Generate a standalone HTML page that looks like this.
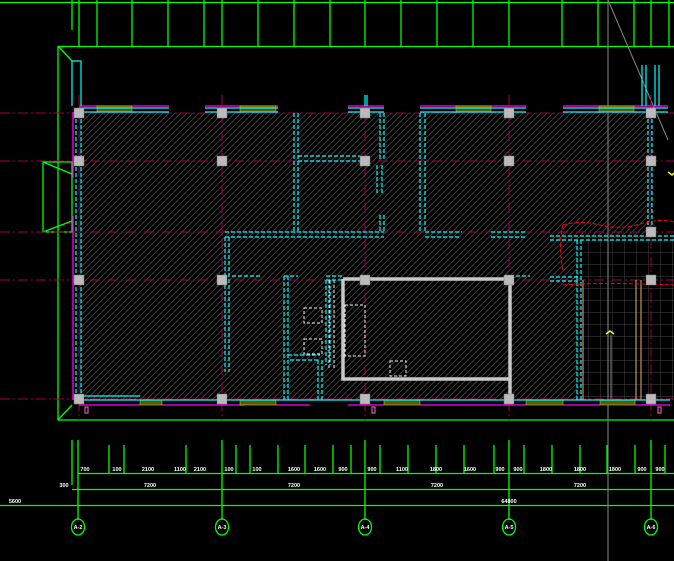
<!DOCTYPE html>
<html><head><style>html,body{margin:0;padding:0;background:#000;overflow:hidden}svg{display:block}</style></head>
<body>
<svg width="674" height="561" viewBox="0 0 674 561" xmlns="http://www.w3.org/2000/svg" font-family="Liberation Sans, sans-serif">
<defs>
<pattern id="h" width="6" height="6" patternUnits="userSpaceOnUse"><path d="M0 6 L6 0 M-1 1 L1 -1 M5 7 L7 5" stroke="#3c3c3c" stroke-width="1"/></pattern>
<pattern id="g" width="12" height="12" patternUnits="userSpaceOnUse"><path d="M0 0 H12 M0 0 V12" stroke="#444" stroke-width="1" fill="none"/></pattern>
</defs>
<rect width="674" height="561" fill="#000"/>
<rect x="79" y="113" width="572" height="287" fill="url(#h)"/>
<rect x="580" y="238" width="94" height="162" fill="#000"/>
<rect x="580" y="238" width="94" height="162" fill="url(#g)"/>
<g stroke="#00ff00" stroke-width="1.3" fill="none">
<line x1="0" y1="2.5" x2="674" y2="2.5"/>
<line x1="58" y1="46.5" x2="674" y2="46.5"/>
<path d="M72 0V30 M79 0V46 M97 0V46 M132 0V46 M168 0V46 M204 0V46 M222 0V46 M258 0V46 M294 0V46 M330 0V46 M365 0V46 M401 0V46 M437 0V46 M473 0V46 M509 0V46 M562 0V46 M598 0V46 M634 0V46 M651 0V46 M669 0V46"/>
<path d="M58 46V420H674 M58 46L72 61 M58 420L72 405"/>
<path d="M43 162H72V232H43Z M43 162L72 174 M43 232L72 221"/>
<path d="M72 440V485 M78 440V520 M222 440V520 M365 440V520 M509 440V520 M651 440V520"/>
<path d="M109 445V473 M124 445V473 M186 445V473 M236 445V473 M250 445V473 M278 445V473 M305 445V473 M333 445V473 M351 445V473 M380 445V473 M408 445V473 M436 445V473 M464 445V473 M494 445V473 M524 445V473 M552 445V473 M580 445V473 M607 445V473 M635 445V473 M665 445V473"/>
<line x1="78" y1="473.5" x2="674" y2="473.5"/>
<line x1="72" y1="489.5" x2="674" y2="489.5"/>
<line x1="0" y1="505.5" x2="674" y2="505.5"/>
<ellipse cx="78" cy="527" rx="6.5" ry="8"/><ellipse cx="222" cy="527" rx="6.5" ry="8"/><ellipse cx="365" cy="527" rx="6.5" ry="8"/><ellipse cx="509" cy="527" rx="6.5" ry="8"/><ellipse cx="651" cy="527" rx="6.5" ry="8"/>
</g>
<g fill="#fff" font-size="5.5" text-anchor="middle" font-weight="bold">
<text x="85" y="471">700</text><text x="117" y="471">100</text><text x="148" y="471">2100</text><text x="180" y="471">1100</text><text x="200" y="471">2100</text><text x="229" y="471">100</text><text x="257" y="471">100</text><text x="294" y="471">1600</text><text x="320" y="471">1600</text><text x="343" y="471">900</text><text x="372" y="471">900</text><text x="402" y="471">1100</text><text x="436" y="471">1800</text><text x="470" y="471">1600</text><text x="500" y="471">900</text><text x="518" y="471">900</text><text x="546" y="471">1800</text><text x="580" y="471">1800</text><text x="615" y="471">1800</text><text x="642" y="471">900</text><text x="660" y="471">900</text>
<text x="150" y="487">7200</text><text x="294" y="487">7200</text><text x="437" y="487">7200</text><text x="580" y="487">7200</text>
<text x="64" y="487">300</text><text x="15" y="503">5600</text><text x="509" y="503">64800</text>
<text x="78" y="529">A-2</text><text x="222" y="529">A-3</text><text x="365" y="529">A-4</text><text x="509" y="529">A-5</text><text x="651" y="529">A-6</text>
</g>
<g stroke="#888" stroke-width="1"><line x1="608" y1="0" x2="608" y2="561"/><line x1="608" y1="0" x2="668" y2="140"/></g>
<g stroke="#a0004a" stroke-width="1" stroke-dasharray="10 3 2 3">
<line x1="0" y1="113" x2="674" y2="113"/><line x1="0" y1="161" x2="674" y2="161"/><line x1="0" y1="232" x2="674" y2="232"/><line x1="0" y1="280" x2="674" y2="280"/><line x1="0" y1="399" x2="674" y2="399"/>
<line x1="79" y1="95" x2="79" y2="420"/><line x1="222" y1="95" x2="222" y2="420"/><line x1="365" y1="95" x2="365" y2="420"/><line x1="509" y1="95" x2="509" y2="420"/><line x1="651" y1="95" x2="651" y2="420"/>
</g>
<g stroke="#ff00ff" stroke-width="1.3" fill="none">
<path d="M79 106H169 M205 106H278 M348 106H384 M420 106H526 M563 106H668 M73 112V178 M73 216V400 M79 405H140 M162 405H245 M276 405H310 M348 405H384 M420 405H526 M563 405H600 M635 405H670"/>
</g>
<g stroke="#ffd000" fill="#5a5a00" stroke-width="0.5">
<rect x="97" y="106" width="35" height="6"/><rect x="240" y="106" width="36" height="6"/><rect x="456" y="106" width="35" height="6"/><rect x="599" y="106" width="35" height="6"/>
<rect x="140" y="400" width="22" height="5"/><rect x="240" y="400" width="36" height="5"/><rect x="384" y="400" width="36" height="5"/><rect x="526" y="400" width="37" height="5"/><rect x="600" y="400" width="35" height="5"/>
</g>
<g stroke="#00ffff" stroke-width="1.2" fill="none">
<path d="M79 108V112 M79 112H169 M205 112H278 M348 112H384 M420 112H526 M563 112H668 M79 108H169 M205 108H278 M348 108H384 M420 108H526 M563 108H668"/>
<path d="M72 61H81V106 M72 61V106"/>
<path d="M79 400H670 M79 396H140" />
<path d="M642 65V106 M646 65V106 M655 65V106 M659 65V106 M365 95V106 M367 95V106"/>
</g>
<g stroke="#00ffff" stroke-width="1.2" fill="none" stroke-dasharray="4 2">
<path d="M76 113V400 M81 113V400"/>
<path d="M294 113V232 M298 113V232 M298 156H360 M298 161H360 M380 113V160 M384 113V160 M377 165V195 M382 165V195 M380 215V232 M384 215V232"/>
<path d="M225 232H384 M225 237H384 M225 237V372 M229 237V372 M232 276H262 M284 276H298 M284 276V400 M288 276V400 M288 355H320 M290 360H318 M318 360V400 M322 360V400"/>
<path d="M420 113V232 M425 113V232 M425 232H462 M425 237H460 M491 232H526 M491 237H526 M648 113V235 M652 113V235 M510 276H530"/>
<path d="M550 236H674 M550 240H674 M577 240V400 M581 240V400 M550 277H580 M550 281H580"/>
<path d="M326 276H342 M326 280H342 M326 280V365 M330 280V365"/>
</g>
<g stroke="#c8c8c8" fill="none" stroke-width="3.5">
<path d="M343 279H510V400 M343 279V379H509"/>
</g>
<g stroke="#eee" fill="none" stroke-width="1" stroke-dasharray="3 2">
<rect x="304" y="308" width="18" height="15"/><rect x="304" y="339" width="18" height="15"/><rect x="345" y="305" width="20" height="51"/><rect x="390" y="361" width="16" height="15"/>
<path d="M329 280V370 M334 280V370"/>
</g>
<g fill="none" stroke-width="1">
<path d="M583 280V400 M636 280V400 M641 280V400" stroke="#e8b070"/>
<path d="M563 225Q580 220 600 225T640 224T674 222 M563 225Q558 245 563 270 M563 285Q600 282 674 285" stroke="#ff0000" stroke-dasharray="4 2"/>
<line x1="611" y1="335" x2="611" y2="400" stroke="#888"/>
</g>
<path d="M606 334L610 331L614 334" stroke="#ff0" fill="none" stroke-width="1.5"/>
<path d="M668 172L672 175L674 173" stroke="#ff0" fill="none" stroke-width="1.5"/>
<g fill="#bbb" stroke="#777" stroke-width="0.5">
<rect x="74" y="108" width="10" height="10"/><rect x="217" y="108" width="10" height="10"/><rect x="360" y="108" width="10" height="10"/><rect x="504" y="108" width="10" height="10"/><rect x="646" y="108" width="10" height="10"/>
<rect x="74" y="156" width="10" height="10"/><rect x="217" y="156" width="10" height="10"/><rect x="360" y="156" width="10" height="10"/><rect x="504" y="156" width="10" height="10"/><rect x="646" y="156" width="10" height="10"/>
<rect x="646" y="227" width="10" height="10"/>
<rect x="74" y="275" width="10" height="10"/><rect x="217" y="275" width="10" height="10"/><rect x="360" y="275" width="10" height="10"/><rect x="504" y="275" width="10" height="10"/><rect x="646" y="275" width="10" height="10"/>
<rect x="74" y="394" width="10" height="10"/><rect x="217" y="394" width="10" height="10"/><rect x="360" y="394" width="10" height="10"/><rect x="504" y="394" width="10" height="10"/><rect x="646" y="394" width="10" height="10"/>
</g>
<g stroke="#ff66cc" fill="none" stroke-width="1"><rect x="85" y="407" width="3" height="6"/><rect x="372" y="407" width="3" height="6"/><rect x="658" y="407" width="3" height="6"/></g>
</svg>
</body></html>
